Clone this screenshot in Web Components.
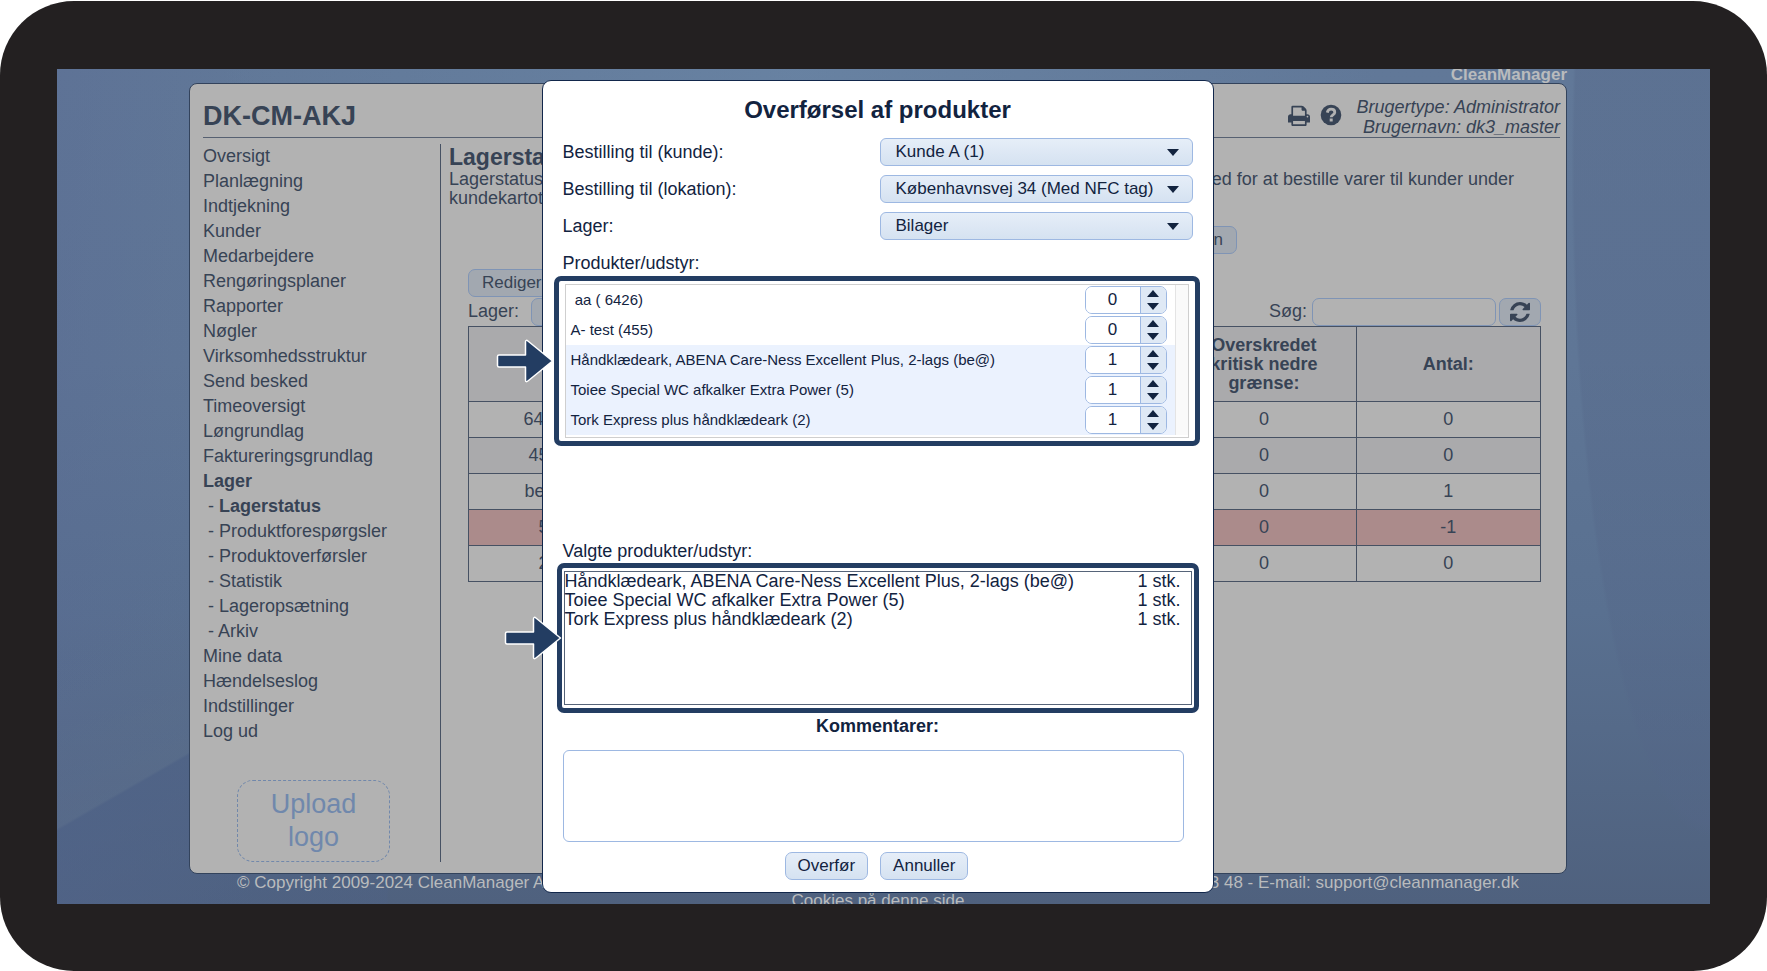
<!DOCTYPE html>
<html lang="da">
<head>
<meta charset="utf-8">
<title>CleanManager – Lagerstatus</title>
<style>
html, body { margin: 0; background: #fff; }
body { font: 18px/20px "Liberation Sans", Arial, sans-serif; color: #374355; }
</style>
</head>
<body>
<cm-device>
  <cm-page>
    <cm-nav slot="nav"></cm-nav>
    <cm-stock slot="main"></cm-stock>
    <cm-transfer slot="dialog"></cm-transfer>
  </cm-page>
</cm-device>

<script>
const define = (name, html, setup) => customElements.define(name, class extends HTMLElement {
  constructor() {
    super();
    this.attachShadow({ mode: 'open' });
  }
  connectedCallback() {
    if (this.shadowRoot.childNodes.length) return;
    const t = document.createElement('template');
    t.innerHTML = typeof html === 'function' ? html(this) : html;
    this.shadowRoot.append(t.content.cloneNode(true));
    if (setup) setup(this);
  }
});

/* Tablet frame */
define('cm-device', `
<style>
:host { display: flex; box-sizing: border-box; height: calc(100vh - 1px); min-height: 970px; margin-top: 1px; padding: 68px 57px 67px; background: #232021; border-radius: 74px; }
.screen { flex: 1; display: flex; min-width: 0; overflow: hidden;
  background:
    linear-gradient(150deg, rgba(92,116,140,0) 55%, rgba(92,112,140,.4) 74%, rgba(78,98,134,.7) 74.300%, rgba(78,98,134,.3) 100%) 0 0 / 20% 100% no-repeat,
    radial-gradient(ellipse 60% 80% at 100% 12%, rgba(84,102,136,.35) 98%, transparent 100%) 100% 0 / 14% 100% no-repeat,
    radial-gradient(ellipse 35% 60% at 45% 0, rgba(108,136,168,.6), transparent),
    linear-gradient(90deg, rgba(88,104,146,.35), transparent 12%),
    linear-gradient(180deg, #617898 0%, #5f7696 35%, #597090 65%, #4f617e 100%); }
slot { display: contents; }
</style>
<div class="screen"><slot></slot></div>`);

/* Page shell: brand, panel, footer */
define('cm-page', `
<style>
:host { flex: 1; min-width: 0; display: flex; flex-direction: column; padding: 0 143px 0 132px; position: relative; }
.brand { height: 14px; display: flex; align-items: flex-start; justify-content: flex-end; font-size: 17px; font-weight: bold; line-height: 12px; color: #b9bbbd; }
.panel { flex: 1; min-height: 0; box-sizing: border-box; display: flex; flex-direction: column; padding: 0 6px 11px 13px; background: #b2b2b2; border: 1px solid #33435c; border-radius: 8px; }
header { display: flex; align-items: center; height: 53px; border-bottom: 1px solid #566071; }
h1 { flex: 1; margin: 0; padding-top: 10px; font-size: 27px; line-height: 32px; }
header a { display: flex; margin: 9px 10px 0 0; color: #374355; }
.user { margin-left: 5px; padding-top: 12px; font-style: italic; line-height: 20px; text-align: right; }
.print, .help { width: 22px; height: 22px; }
.cols { flex: 1; display: flex; min-height: 0; padding-top: 6px; }
footer { height: 30px; padding: 0 48px; font-size: 17px; line-height: 18px; color: #b9bbbd; }
.row { display: flex; justify-content: space-between; }
.cookies { text-align: center; }
.cookies a { color: inherit; text-decoration: none; }
</style>
<div class="brand">CleanManager</div>
<div class="panel">
  <header>
    <h1>DK-CM-AKJ</h1>
    <a href="#print" aria-label="Udskriv"><svg class="print" viewBox="0 0 1664 1664"><path fill="currentColor" d="M384 1536h896v-256H384v256zm0-640h896V512h-160q-40 0-68-28t-28-68V256H384v640zm1152 64q0-26-19-45t-45-19-45 19-19 45 19 45 45 19 45-19 19-45zm128 0v416q0 13-9.500 22.500t-22.500 9.500h-224v160q0 40-28 68t-68 28H352q-40 0-68-28t-28-68v-160H32q-13 0-22.500-9.500T0 1376V960q0-79 56.500-135.500T192 768h64V224q0-40 28-68t68-28h672q40 0 88 20t76 48l152 152q28 28 48 76t20 88v256h64q79 0 135.500 56.500T1664 960z"/></svg></a>
    <a href="#help" aria-label="Hjælp"><svg class="help" viewBox="0 0 22 22"><circle cx="11" cy="11" r="10.300" fill="currentColor"/><path d="M7.300 8.600C7.800 6.200 9.200 5.200 11.100 5.200c2.200 0 3.700 1.300 3.700 3 0 2.600-3.600 2.700-3.600 5.100" fill="none" stroke="#b2b2b2" stroke-width="2.800"/><rect x="9.700" y="14.500" width="3" height="3" fill="#b2b2b2"/></svg></a>
    <div class="user"><div>Brugertype: Administrator</div><div>Brugernavn: dk3_master</div></div>
  </header>
  <div class="cols"><slot name="nav"></slot><slot name="main"></slot></div>
</div>
<footer>
  <div class="row"><span>© Copyright 2009-2024 CleanManager ApS</span><span>3 48 - E-mail: support@cleanmanager.dk</span></div>
  <div class="cookies"><a href="#cookies">Cookies på denne side</a></div>
</footer>
<slot name="dialog"></slot>`);

/* Left navigation */
const navItems = ['Oversigt', 'Planlægning', 'Indtjekning', 'Kunder', 'Medarbejdere', 'Rengøringsplaner', 'Rapporter', 'Nøgler',
  'Virksomhedsstruktur', 'Send besked', 'Timeoversigt', 'Løngrundlag', 'Faktureringsgrundlag', '*Lager', '-*Lagerstatus',
  '-Produktforespørgsler', '-Produktoverførsler', '-Statistik', '-Lageropsætning', '-Arkiv', 'Mine data', 'Hændelseslog', 'Indstillinger', 'Log ud'];
const navLink = raw => {
  const sub = raw.startsWith('-'), text = raw.replace(/^-/, ''), on = text.startsWith('*'), name = text.replace('*', '');
  return `<li class="${sub ? 'sub' : ''}">${sub ? '- ' : ''}<a href="#${encodeURIComponent(name)}" class="${on ? 'on' : ''}">${name}</a></li>`;
};
define('cm-nav', `
<style>
:host { flex: none; width: 237px; display: flex; flex-direction: column; justify-content: space-between; border-right: 1px solid #465163; }
ul { margin: 0; padding: 0; list-style: none; line-height: 25px; }
.sub { padding-left: 5px; }
a { color: inherit; text-decoration: none; }
.on { font-weight: bold; }
button { box-sizing: border-box; width: 153px; height: 82px; margin: 0 0 0 34px; padding: 0 30px; background: none; border: 1px dashed #7188ab; border-radius: 16px; color: #7088ac; font: 27px/33px "Liberation Sans", Arial, sans-serif; }
</style>
<ul>${navItems.map(navLink).join('')}</ul>
<button type="button">Upload logo</button>`);

/* Stock status */
const stock = [['6426', '0', '0'], ['455', '0', '0'], ['be@', '0', '1'], ['5', '0', '-1'], ['2', '0', '0']];
define('cm-stock', `
<style>
:host { flex: 1; min-width: 0; display: block; padding: 1px 0 0 8px; line-height: 19px; }
h2 { margin: 0; font-size: 23px; line-height: 25px; }
.intro { margin: 0 46px 0 0; display: flex; flex-wrap: wrap; justify-content: space-between; }
.intro span:last-child { flex-basis: 100%; }
.body { margin: 0 19px; }
button, select, input { box-sizing: border-box; height: 28px; margin: 0; border: 1px solid #7f94b5; border-radius: 7px; background: #a2a8b0; color: inherit; font: 17px/20px "Liberation Sans", Arial, sans-serif; }
button { padding: 0 13px; }
.actions { display: flex; padding: 18px 304px 0 0; justify-content: flex-end; }
.edit { display: flex; padding-top: 15px; }
.tools { display: flex; align-items: center; height: 29px; }
.tools select { width: 200px; margin-left: 12px; }
.tools .find { margin-left: auto; padding-right: 5px; }
.tools input { width: 184px; background: #b2b2b2; margin-right: 3px; }
.tools button { width: 42px; padding: 0; display: flex; align-items: center; justify-content: center; }
.tools svg { width: 20px; height: 20px; }
table { width: 100%; border-collapse: collapse; table-layout: fixed; text-align: center; }
th, td { border: 1px solid #465163; padding: 0; height: 35px; }
th { height: 75px; padding: 0 24px; box-sizing: border-box; background: #aaaaac; }
tr:nth-child(even) td { background: #aaaaac; }
tr.low td, tr.low:nth-child(even) td { background: #ab8b8b; }
</style>
<h2>Lagerstatus</h2>
<p class="intro"><span>Lagerstatus</span><span>med for at bestille varer til kunder under</span><span>kundekartoteket</span></p>
<div class="body">
  <div class="actions"><button type="button">Opret lokation</button></div>
  <div class="edit"><button type="button">Rediger</button></div>
  <div class="tools">
    <label for="lager">Lager:</label><select id="lager"><option></option></select>
    <label class="find" for="find">Søg:</label><input id="find" type="text">
    <button type="button" aria-label="Opdater"><svg viewBox="0 0 1536 1536"><path fill="currentColor" d="M1511 928q0 5-1 7-64 268-268 434.500T764 1536q-146 0-282.500-55T238 1324l-129 129q-19 19-45 19t-45-19-19-45V960q0-26 19-45t45-19h448q26 0 45 19t19 45-19 45l-137 137q71 66 161 102t187 36q134 0 250-65t186-179q11-17 53-117 8-23 30-23h192q13 0 22.500 9.500t9.500 22.500zm25-800v448q0 26-19 45t-45 19h-448q-26 0-45-19t-19-45 19-45l138-138Q969 256 768 256q-134 0-250 65T332 500q-11 17-53 117-8 23-30 23H50q-13 0-22.500-9.500T18 608v-7q65-268 270-434.500T768 0q146 0 284 55.500T1297 212l130-129q19-19 45-19t45 19 19 45z"/></svg></button>
  </div>
  <table>
    <colgroup><col style="width:14%"><col><col><col><col><col></colgroup>
    <thead><tr><th>Nr.</th><th></th><th></th><th></th><th>Overskredet kritisk nedre grænse:</th><th>Antal:</th></tr></thead>
    <tbody>${stock.map(r => `<tr class="${+r[2] < 0 ? 'low' : ''}"><td>${r[0]}</td><td></td><td></td><td></td><td>${r[1]}</td><td>${r[2]}</td></tr>`).join('')}</tbody>
  </table>
</div>`);

/* Label with a drop-down */
define('cm-field', el => `
<style>
:host { display: flex; align-items: center; height: 28px; margin-bottom: 9px; }
label { flex: 1; }
.box { position: relative; flex: none; width: 50%; max-width: 313px; }
.box::after { content: ""; position: absolute; right: 14px; top: 11px; border: 6px solid transparent; border-top: 7px solid #12233f; border-bottom: 0; pointer-events: none; }
select { display: block; appearance: none; box-sizing: border-box; width: 100%; height: 28px; padding: 0 34px 0 15px; border: 1px solid #9db8e2; border-radius: 6px; background: linear-gradient(#e6eef8, #d5e2f1); color: inherit; font: 17px/20px "Liberation Sans", Arial, sans-serif; }
</style>
<label for="s">${el.getAttribute('label')}</label>
<div class="box"><select id="s"><option>${el.getAttribute('value')}</option></select></div>`);

/* Highlight ring with a pointing arrow */
define('cm-callout', `
<style>
:host { display: block; position: relative; box-sizing: border-box; border: 5px solid #233d62; border-radius: 7px; }
svg { position: absolute; right: var(--arrow-end, calc(100% + 4px)); top: 50%; width: 60px; height: 46px; margin-top: -23px; }
</style>
<svg viewBox="0 0 60 46" aria-hidden="true"><path d="M4 17H30.500V4Q30.500 1 33.500 3.500L57.500 23L33.500 42.500Q30.500 45 30.500 42V29H4Q2.500 29 2.500 27.500V18.500Q2.500 17 4 17Z" fill="#233d62" stroke="#fff" stroke-width="1.500" stroke-linejoin="round"/></svg>
<slot></slot>`);

/* Product line with a quantity stepper */
define('cm-product', el => `
<style>
:host { display: flex; align-items: center; height: 30px; padding: 0 8px 0 5px; font-size: 15px; }
:host([chosen]) { background: #ebf2fe; }
label { flex: 1; white-space: pre; }
.step { display: flex; box-sizing: border-box; width: 82px; height: 28px; border: 1px solid #9db8e2; border-radius: 7px; overflow: hidden; background: #fff; }
input { appearance: textfield; flex: 1; min-width: 0; box-sizing: border-box; padding: 0; border: 0; border-right: 1px solid #9db8e2; background: #fff; color: inherit; text-align: center; font: 17px/20px "Liberation Sans", Arial, sans-serif; }
input::-webkit-inner-spin-button { appearance: none; margin: 0; }
.btns { display: flex; flex-direction: column; width: 25px; background: #dfe9f5; }
button { flex: 1; display: flex; align-items: center; justify-content: center; padding: 0; border: 0; background: none; color: #12233f; }
svg { width: 12px; height: 7px; }
</style>
<label for="q">${el.getAttribute('name')}</label>
<div class="step"><input id="q" type="number" value="${el.getAttribute('qty')}">
<div class="btns"><button type="button" aria-label="Flere"><svg viewBox="0 0 12 7"><path d="M0 7L6 0L12 7Z" fill="currentColor"/></svg></button><button type="button" aria-label="Færre"><svg viewBox="0 0 12 7"><path d="M0 0L6 7L12 0Z" fill="currentColor"/></svg></button></div></div>`);

/* Transfer dialog */
const chosen = ['Håndklædeark, ABENA Care-Ness Excellent Plus, 2-lags (be@)', 'Toiee Special WC afkalker Extra Power (5)', 'Tork Express plus håndklædeark (2)'];
define('cm-transfer', `
<style>
:host { position: absolute; top: 11px; left: calc(50% - 342px); box-sizing: border-box; width: 672px; padding: 0 20px 12px; background: #fff; border: 1px solid #12274b; border-radius: 9px; color: #12233f; }
h2 { margin: 0; padding: 15px 0 14px; font-size: 24px; line-height: 28px; text-align: center; }
.cap { line-height: 28px; }
.products { margin: -1px -7px 0 -9px; padding: 3px 5px; }
.list { display: flex; border: 1px solid #cfcfcf; padding-bottom: 2px; margin: 0 1px; }
.rows { flex: 1; }
.gutter { width: 12px; background: #fafafa; border-left: 1px solid #e4e4e4; }
.picked { --arrow-end: calc(100% - 1px); margin: -2px -6px 0; padding: 3px 2px; }
.spacer { height: 91px; }
table { width: 100%; border-collapse: collapse; line-height: 19px; }
.frame { min-height: 132px; border: 1px solid #566479; }
td { padding: 0; }
td:last-child { text-align: right; padding-right: 10px; }
.comment { display: block; line-height: 26px; font-weight: bold; text-align: center; }
textarea { display: block; box-sizing: border-box; width: calc(100% - 9px); height: 92px; margin: 11px 0 10px; border: 1px solid #9db8e2; border-radius: 6px; background: #fff; resize: none; font: inherit; }
.foot { display: flex; justify-content: center; gap: 12px; padding-right: 2px; }
.foot button { height: 28px; padding: 0 12px; border: 1px solid #9db8e2; border-radius: 7px; background: linear-gradient(#e6eef8, #d5e2f1); color: inherit; font: 17px/20px "Liberation Sans", Arial, sans-serif; }
</style>
<h2>Overførsel af produkter</h2>
<cm-field label="Bestilling til (kunde):" value="Kunde A (1)"></cm-field>
<cm-field label="Bestilling til (lokation):" value="Københavnsvej 34 (Med NFC tag)"></cm-field>
<cm-field label="Lager:" value="Bilager"></cm-field>
<div class="cap">Produkter/udstyr:</div>
<cm-callout class="products"><div class="list"><div class="rows">
<cm-product name=" aa ( 6426)" qty="0"></cm-product>
<cm-product name="A- test (455)" qty="0"></cm-product>
${chosen.map(n => `<cm-product name="${n}" qty="1" chosen></cm-product>`).join('')}
</div><div class="gutter"></div></div></cm-callout>
<div class="spacer"></div>
<div class="cap">Valgte produkter/udstyr:</div>
<cm-callout class="picked"><div class="frame"><table>${chosen.map(n => `<tr><td>${n}</td><td>1 stk.</td></tr>`).join('')}</table></div></cm-callout>
<label class="comment" for="c">Kommentarer:</label>
<textarea id="c"></textarea>
<div class="foot"><button type="button">Overfør</button><button type="button">Annuller</button></div>`);
</script>
</body>
</html>
